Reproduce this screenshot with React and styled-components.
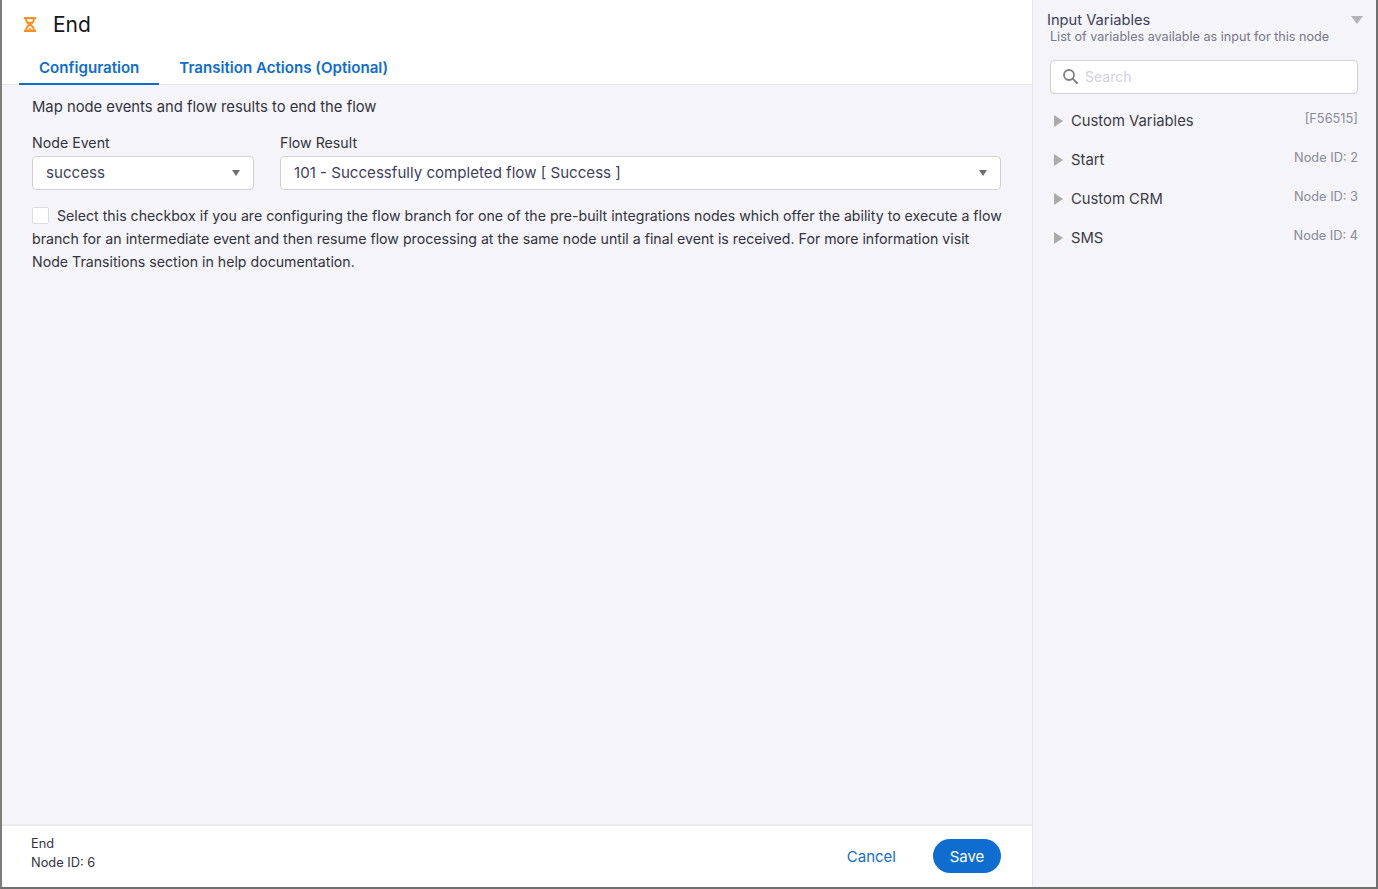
import React from "react";
import styled, { createGlobalStyle } from "styled-components";

const Global = createGlobalStyle`
  html, body { margin: 0; padding: 0; height: 100%; }
  body { font-family: Inter, "Liberation Sans", sans-serif; background: #f4f4f9; overflow: hidden; }
  * { box-sizing: border-box; }
`;

const Frame = styled.div`
  width: 1378px; height: 889px; display: flex;
  border-left: 2px solid #7d7d7d; border-right: 2px solid #6f6f6f; border-bottom: 2px solid #6f6f6f;
  background: #f4f4f9;
`;
const Main = styled.main`
  width: 1031px; display: flex; flex-direction: column; flex: none;
  border-right: 1px solid #e6e6ec;
`;
const Header = styled.header`
  height: 85px; background: #fff; border-bottom: 1px solid #e3e3e8; flex: none;
  display: flex; flex-direction: column; padding-left: 17px;
`;
const TitleRow = styled.div`
  height: 49px; display: flex; align-items: center; gap: 17px; padding: 0 0 0 5px;
`;
const Title = styled.h1`
  margin: 0; font-size: 21px; font-weight: 400; color: #16161d; line-height: 28px;
`;
const Tabs = styled.nav` display: flex; height: 35px; `;
const Tab = styled.div`
  padding: 1px 20px 0; font-size: 15.1px; font-weight: 600; color: #0e6dcf; height: 36px;
  line-height: 35px; border-bottom: ${(p) => (p.$active ? "2px solid #0e6dcf" : "none")};
`;
const Content = styled.section`
  flex: 1; padding: 11px 30px 0 30px; color: #33333d;
`;
const Intro = styled.p` margin: 0; line-height: 23px; font-size: 14.8px; `;
const Fields = styled.div` display: flex; gap: 26px; margin-top: 14px; `;
const Field = styled.div` width: ${(p) => p.$w}px; `;
const Label = styled.div` font-size: 14.2px; line-height: 20px; color: #33333d; margin-bottom: 3px; `;
const Select = styled.div`
  height: 34px; background: #fff; border: 1px solid #cfcfd6; border-radius: 4px;
  display: flex; align-items: center; justify-content: space-between;
  padding: 0 13px 2px 13px; color: #3f3f5c; font-size: 15.1px;
`;
const Caret = styled.span`
  width: 0; height: 0; margin-top: 2px; border-left: 4.5px solid transparent; border-right: 4.5px solid transparent;
  border-top: 6px solid #6e6e6e;
`;
const Note = styled.p` margin: 14px 0 0; line-height: 23px; width: 975px; font-size: 14.17px; `;
const Check = styled.span`
  display: inline-block; width: 17px; height: 17px; background: #fff; border: 1px solid #dcdce2;
  border-radius: 2px; vertical-align: -3px; margin-right: 8px;
`;
const Footer = styled.footer`
  height: 63px; background: #fff; border-top: 2px solid #ebebee; flex: none;
  display: flex; align-items: center; justify-content: space-between; padding: 0 31px 0 29px;
`;
const Meta = styled.div` font-size: 12.8px; line-height: 19px; color: #33333d; margin-top: -7px; `;
const Actions = styled.div` display: flex; align-items: center; gap: 37px; margin-top: -2px; `;
const Cancel = styled.button`
  border: 0; background: none; padding: 2px 0 0; font: inherit; font-size: 15px; color: #0e6dcf;
`;
const Save = styled.button`
  border: 0; background: #0e6dcf; color: #fff; font: inherit; font-size: 15px;
  width: 68px; height: 34px; border-radius: 17px; padding: 2px 0 0;
`;
const Side = styled.aside` flex: 1; padding: 11px 13px 0 14px; color: #33333d; `;
const SideHead = styled.div` display: flex; justify-content: space-between; align-items: flex-start; `;
const SideTitle = styled.div` font-size: 14.7px; line-height: 18px; color: #3f3f5c; `;
const SideCaret = styled.span`
  width: 0; height: 0; margin-top: 5px; border-left: 6px solid transparent; border-right: 6px solid transparent;
  border-top: 8px solid #b4b4b8;
`;
const SideSub = styled.div` font-size: 12.6px; line-height: 15px; color: #777788; padding-left: 3px; `;
const Search = styled.div`
  margin: 16px 5px 0 3px; height: 34px; background: #fff; border: 1px solid #cfcfd6; border-radius: 4px;
  display: flex; align-items: center; gap: 7px; padding: 0 0 1px 12px; color: #d2d2d8; font-size: 14px;
  svg { color: #7f7f7f; }
`;
const Tree = styled.ul` list-style: none; margin: 8px 5px 0 7px; padding: 0; `;
const Row = styled.li`
  height: 38.8px; display: flex; align-items: center; gap: 8px; font-size: 14.8px; color: #3b3b45;
`;
const Arrow = styled.span`
  width: 0; height: 0; border-top: 6.5px solid transparent; border-bottom: 6.5px solid transparent;
  border-left: 9px solid #aaaaaa; flex: none;
`;
const RowName = styled.span` flex: 1; `;
const RowMeta = styled.span` font-size: 12.8px; color: #8a8a96; margin-top: -5px; `;

function Hourglass() {
  return (
    <svg width="12" height="15" viewBox="0 0 12 15">
      <path d="M0 0h12v2.200h-1.200c0 2.300-1.300 3.800-2.900 5.300 1.600 1.500 2.900 3 2.900 5.300H12V15H0v-2.200h1.200c0-2.300 1.300-3.800 2.900-5.300C2.500 6 1.200 4.500 1.200 2.200H0z" fill="#fb8f24" />
      <path d="M3 2.200h6c-.1 1-.5 1.800-1.100 2.500H4.100C3.500 4 3.100 3.200 3 2.200zM6 8.700c1.200 1.100 2.800 2.300 3 4.100H3c.2-1.800 1.800-3 3-4.100z" fill="#fff" />
      <path d="M4 12.800c.3-.9 1.200-1.500 2-2.100.8.600 1.700 1.200 2 2.100z" fill="#fb8f24" />
    </svg>
  );
}

function SearchIcon() {
  return (
    <svg width="15" height="15" viewBox="0 0 15 15" fill="none" stroke="currentColor" strokeWidth="1.800">
      <circle cx="6" cy="6" r="5" />
      <path d="M9.700 9.700 14 14" strokeLinecap="round" />
    </svg>
  );
}

const rows = [
  ["Custom Variables", "[F56515]"],
  ["Start", "Node ID: 2"],
  ["Custom CRM", "Node ID: 3"],
  ["SMS", "Node ID: 4"],
];

export default function App() {
  return (
    <>
      <Global />
      <Frame>
        <Main>
          <Header>
            <TitleRow>
              <Hourglass />
              <Title>End</Title>
            </TitleRow>
            <Tabs>
              <Tab $active>Configuration</Tab>
              <Tab>Transition Actions (Optional)</Tab>
            </Tabs>
          </Header>
          <Content>
            <Intro>Map node events and flow results to end the flow</Intro>
            <Fields>
              <Field $w={222}>
                <Label>Node Event</Label>
                <Select>success<Caret /></Select>
              </Field>
              <Field $w={721}>
                <Label>Flow Result</Label>
                <Select>101 - Successfully completed flow [ Success ]<Caret /></Select>
              </Field>
            </Fields>
            <Note>
              <Check />Select this checkbox if you are configuring the flow branch for one of the pre-built integrations nodes which offer the ability to execute a flow branch for an intermediate event and then resume flow processing at the same node until a final event is received. For more information visit Node Transitions section in help documentation.
            </Note>
          </Content>
          <Footer>
            <Meta>End<br />Node ID: 6</Meta>
            <Actions>
              <Cancel>Cancel</Cancel>
              <Save>Save</Save>
            </Actions>
          </Footer>
        </Main>
        <Side>
          <SideHead>
            <SideTitle>Input Variables</SideTitle>
            <SideCaret />
          </SideHead>
          <SideSub>List of variables available as input for this node</SideSub>
          <Search><SearchIcon />Search</Search>
          <Tree>
            {rows.map(([name, meta]) => (
              <Row key={name}>
                <Arrow />
                <RowName>{name}</RowName>
                <RowMeta>{meta}</RowMeta>
              </Row>
            ))}
          </Tree>
        </Side>
      </Frame>
    </>
  );
}
